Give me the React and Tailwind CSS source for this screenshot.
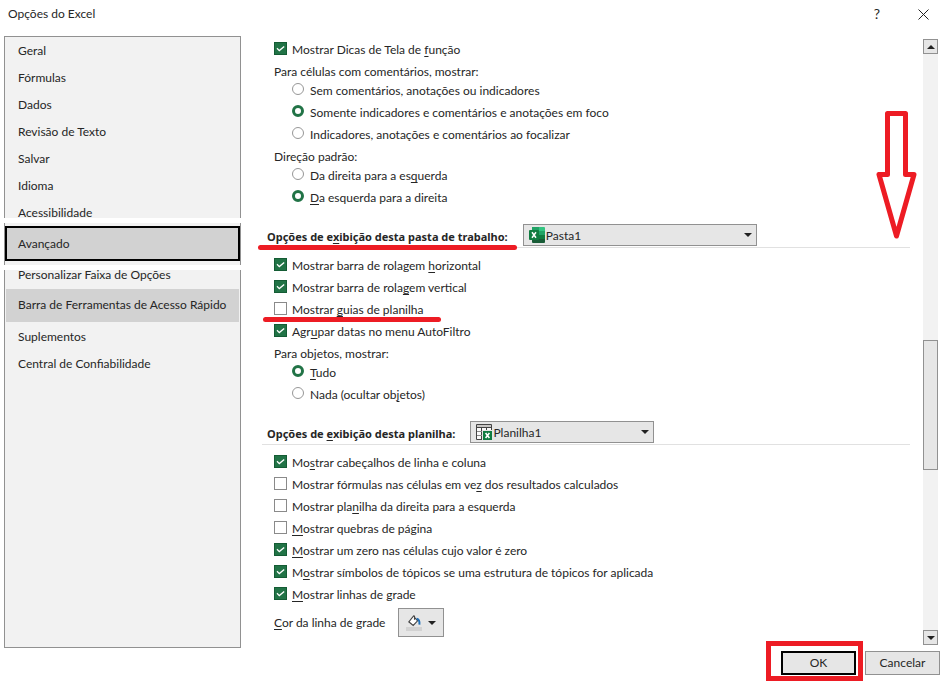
import { useId } from "react";

const NAV_TOP = ["Geral", "Fórmulas", "Dados", "Revisão de Texto", "Salvar", "Idioma"];
const NAV_BOTTOM = ["Suplementos", "Central de Confiabilidade"];

// "&" marks the access key, which is underlined
function Mnemonic({ text }) {
  const at = text.indexOf("&");
  if (at < 0) return text;
  return (
    <>
      {text.slice(0, at)}
      <u className="underline-offset-2">{text[at + 1]}</u>
      {text.slice(at + 2)}
    </>
  );
}

function Check({ text, checked = false, children }) {
  const id = useId();
  return (
    <div className="relative flex h-[22px] items-start gap-[5px] pl-3">
      <span className="mt-[3px] grid size-[13px] shrink-0">
        <input
          id={id}
          type="checkbox"
          defaultChecked={checked}
          className="peer col-start-1 row-start-1 size-[13px] appearance-none border border-[#8a8a8a] bg-white checked:border-[#145c34] checked:bg-[#217346]"
        />
        <svg viewBox="0 0 13 13" className="pointer-events-none col-start-1 row-start-1 hidden size-[13px] peer-checked:block">
          <path d="M3 6.3 5.3 8.6 10.2 4.4" fill="none" stroke="#fff" strokeWidth="1.3" />
        </svg>
      </span>
      <label htmlFor={id} className="leading-[22px] whitespace-nowrap">
        <Mnemonic text={text} />
      </label>
      {children}
    </div>
  );
}

function Radio({ name, text, checked = false }) {
  const id = useId();
  return (
    <div className="flex h-[22px] items-start gap-[6px] pl-[30px]">
      <input
        id={id}
        type="radio"
        name={name}
        defaultChecked={checked}
        className="mt-[3px] size-3 shrink-0 appearance-none rounded-full border border-[#979797] bg-white checked:border-3 checked:border-[#217346]"
      />
      <label htmlFor={id} className="leading-[22px] whitespace-nowrap">
        <Mnemonic text={text} />
      </label>
    </div>
  );
}

function RadioGroup({ title, children }) {
  return (
    <fieldset>
      <legend className="h-[19px] pl-3 leading-[22px]">{title}</legend>
      {children}
    </fieldset>
  );
}

function SectionHeader({ title, option, width, icon, children }) {
  const id = useId();
  return (
    <div className="relative mb-[7px] flex items-end gap-[15px] border-b border-[#e1e1e1] pt-[15px] pb-px pl-[5px]">
      <label htmlFor={id} className="font-['Noto_Sans',sans-serif] text-[11px] leading-[18px] font-bold whitespace-nowrap">
        <Mnemonic text={title} />
      </label>
      <div className={`relative h-[22px] ${width}`}>
        <select id={id} className="block size-full appearance-none border border-[#919191] bg-[#e6e6e6] pt-px pl-[22px]">
          <option>{option}</option>
        </select>
        <span className="pointer-events-none absolute top-[3px] left-[6px]">{icon}</span>
        <Caret className="pointer-events-none absolute top-[9px] right-[5px]" />
      </div>
      {children}
    </div>
  );
}

function Caret({ className = "", up = false }) {
  return (
    <svg width="8" height="4" viewBox="0 0 8 4" className={className}>
      <path d={up ? "M0 4h8L4 0z" : "M0 0h8L4 4z"} fill="#222" />
    </svg>
  );
}

function WorkbookIcon() {
  return (
    <svg width="16" height="16" viewBox="0 0 16 16">
      <path d="M3 0h7v4H3z" fill="#21a366" />
      <path d="M10 0h5a1 1 0 0 1 1 1v3h-6z" fill="#33c481" />
      <path d="M3 4h7v4H3z" fill="#107c41" />
      <path d="M10 4h6v4h-6z" fill="#21a366" />
      <path d="M3 8h7v4H3z" fill="#185c37" />
      <path d="M10 8h6v4h-6z" fill="#107c41" />
      <path d="M3 12h13v3a1 1 0 0 1-1 1H4a1 1 0 0 1-1-1z" fill="#185c37" />
      <rect y="3" width="10" height="10" rx="1" fill="#107c41" />
      <path d="M3 5.2 7 10.8M7 5.2 3 10.8" stroke="#fff" strokeWidth="1.5" />
    </svg>
  );
}

function SheetIcon() {
  return (
    <svg width="16" height="16" viewBox="0 0 16 16">
      <path d="M.5.5h15v15H.5z" fill="#fafafa" stroke="#444" />
      <path d="M1 1h14v2H1z" fill="#c8c6c4" />
      <path d="M0 3.5h16M5.5 3v13M10.5 3v4" stroke="#444" fill="none" />
      <path d="M1 7.5h5M1 11.5h5" stroke="#8a8a8a" fill="none" />
      <path d="M6 6h10v10H6z" fill="#e6e6e6" />
      <path d="M7 7h9v9H7z" fill="#107c41" />
      <path d="M9.6 9 13.4 14M13.4 9 9.6 14" stroke="#fff" strokeWidth="1.6" />
    </svg>
  );
}

function BucketIcon() {
  return (
    <svg width="16" height="16" viewBox="0 0 16 16">
      <path d="M0 12h16v4H0z" fill="#d2d2d2" />
      <path d="M8.5 4.8V1.2L7.6.8 2.8 6.8 7.2 10.4 11.6 5.8 8.5 2.4" fill="#fff" stroke="#444" strokeWidth="1.1" />
      <path d="M10.6 3.6Q14 4.4 13.4 9.6" fill="none" stroke="#1e6fb8" strokeWidth="2" />
    </svg>
  );
}

function RedLine({ className }) {
  return <span className={`absolute h-[5px] rounded-full bg-[#ed1c24] ${className}`} />;
}

function ScrollButton({ up, label }) {
  return (
    <button aria-label={label} className="grid size-[15px] shrink-0 place-items-center border border-[#919191] bg-[#e6e6e6]">
      <Caret up={up} />
    </button>
  );
}

function NavItem({ children, className = "h-[27px]" }) {
  return (
    <a href="#" className={`block overflow-hidden pl-[13px] leading-[27px] whitespace-nowrap ${className}`}>
      {children}
    </a>
  );
}

export default function App() {
  return (
    <div className="flex min-h-screen flex-col bg-white font-['Lato',sans-serif] text-[12px] text-[#262626]">
      <header className="flex h-9 items-start pr-4 pl-2">
        <h1 className="grow leading-7">Opções do Excel</h1>
        <button aria-label="Ajuda" className="mr-[38px] text-[14px] leading-7">?</button>
        <button aria-label="Fechar" className="mt-[9px]">
          <svg width="11" height="11" viewBox="0 0 11 11">
            <path d="M.5.5l10 10M10.5.5l-10 10" stroke="#222" />
          </svg>
        </button>
      </header>

      <main className="relative flex grow pr-[7px] pl-1">
        <nav className="flex w-[237px] shrink-0 flex-col gap-[5px]">
          <div className="border-x border-t border-[#919191] bg-[#f2f2f2]">
            {NAV_TOP.map((item) => (
              <NavItem key={item}>{item}</NavItem>
            ))}
            <NavItem className="h-[19px]">Acessibilidade</NavItem>
          </div>
          <div className="border-x border-[#919191] bg-[#f2f2f2] pt-[3px] pb-1">
            <a href="#" aria-current="page" className="block h-[35px] border-2 border-black bg-[#d2d2d2] pl-[11px] leading-[31px]">
              Avançado
            </a>
          </div>
          <div className="grow border-x border-b border-[#919191] bg-[#f2f2f2]">
            <NavItem className="flex h-[19px] items-end pb-px">Personalizar Faixa de Opções</NavItem>
            <a href="#" className="mx-px mb-px block h-[33px] bg-[#d2d2d2] pl-3 leading-[32px] whitespace-nowrap">
              Barra de Ferramentas de Acesso Rápido
            </a>
            {NAV_BOTTOM.map((item) => (
              <NavItem key={item}>{item}</NavItem>
            ))}
          </div>
        </nav>

        <div className="relative grow pt-[3px] pr-[13px] pl-[21px]">
          <Check text="Mostrar Dicas de Tela de &função" checked />
          <RadioGroup title="Para células com comentários, mostrar:">
            <Radio name="comments" text="Sem comentários, anotações ou indicadores" />
            <Radio name="comments" text="Somente indicadores e comentários e anotações em foco" checked />
            <Radio name="comments" text="Indicadores, anotações e comentários ao focalizar" />
          </RadioGroup>
          <RadioGroup title="Direção padrão:">
            <Radio name="direction" text="Da direita para a es&querda" />
            <Radio name="direction" text="&Da esquerda para a direita" checked />
          </RadioGroup>

          <SectionHeader title="Opções de e&xibição desta pasta de trabalho:" option="Pasta1" width="w-[234px]" icon={<WorkbookIcon />}>
            <RedLine className="-bottom-[3px] -left-1 w-[259px]" />
          </SectionHeader>
          <Check text="Mostrar barra de rolagem &horizontal" checked />
          <Check text="Mostrar barra de rola&gem vertical" checked />
          <Check text="Mostrar &guias de planilha">
            <RedLine className="-bottom-px left-px w-[178px]" />
          </Check>
          <Check text="Agr&upar datas no menu AutoFiltro" checked />
          <RadioGroup title="Para objetos, mostrar:">
            <Radio name="objects" text="&Tudo" checked />
            <Radio name="objects" text="Nada (ocultar ob&jetos)" />
          </RadioGroup>

          <SectionHeader title="Opções de &exibição desta planilha:" option="Planilha1" width="w-[184px]" icon={<SheetIcon />} />
          <Check text="Mo&strar cabeçalhos de linha e coluna" checked />
          <Check text="Mostrar fórmulas nas células em ve&z dos resultados calculados" />
          <Check text="Mostrar pla&nilha da direita para a esquerda" />
          <Check text="&Mostrar quebras de página" />
          <Check text="&Mostrar um zero nas células cujo valor é zero" checked />
          <Check text="M&ostrar símbolos de tópicos se uma estrutura de tópicos for aplicada" checked />
          <Check text="&Mostrar linhas de grade" checked />
          <div className="mt-[2px] flex items-center gap-[13px] pl-3">
            <label htmlFor="grid-color">
              <Mnemonic text="&Cor da linha de grade" />
            </label>
            <button id="grid-color" className="flex h-[29px] w-[46px] items-center justify-center gap-[6px] border border-[#919191] bg-[#e6e6e6]">
              <BucketIcon />
              <Caret />
            </button>
          </div>

          {/* Arrow pointing down the page */}
          <svg width="41" height="128" viewBox="876 111 41 128" className="pointer-events-none absolute top-[75px] right-[6px]">
            <path
              d="M887.5 113.5H905.5V174.5H914L896.5 236 879 174.5H887.5Z"
              fill="#fff"
              stroke="#ed1c24"
              strokeWidth="5"
              strokeLinejoin="round"
            />
          </svg>
        </div>

        <div className="my-[3px] flex w-[15px] shrink-0 flex-col bg-[#f2f2f2]">
          <ScrollButton up label="Rolar para cima" />
          <div className="grow-[287]" />
          <div className="grow-[128] border border-[#919191] bg-[#e6e6e6]" />
          <div className="grow-[161]" />
          <ScrollButton label="Rolar para baixo" />
        </div>
      </main>

      <footer className="flex justify-end gap-[9px] pt-[3px] pr-[5px] pb-[7px]">
        <div className="relative">
          <button className="block h-6 w-[75px] border-2 border-black bg-[#e6e6e6]">OK</button>
          <span className="pointer-events-none absolute -top-[10px] -right-[7px] -bottom-[6px] -left-[15px] border-5 border-[#ed1c24]" />
        </div>
        <button className="h-6 w-[75px] border border-[#919191] bg-[#e6e6e6]">Cancelar</button>
      </footer>
    </div>
  );
}
